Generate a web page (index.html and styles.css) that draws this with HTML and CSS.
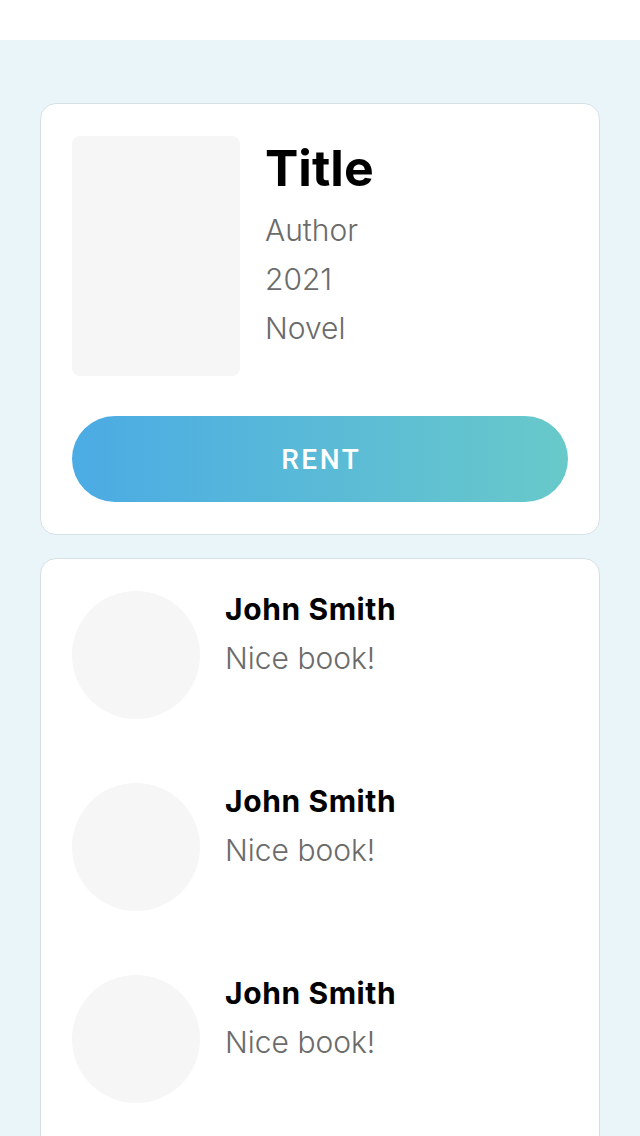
FILE: index.html
```html
<!DOCTYPE html>
<html>
<head>
<meta charset="utf-8">
<link rel="stylesheet" href="styles.css">
</head>
<body>
<div class="topbar"></div>
<main class="content">
  <section class="card book">
    <div class="book-info">
      <div class="cover"></div>
      <div class="meta">
        <h1 class="title">Title</h1>
        <div class="line">Author</div>
        <div class="line">2021</div>
        <div class="line">Novel</div>
      </div>
    </div>
    <button class="rent">RENT</button>
  </section>
  <section class="card comments">
    <div class="comment">
      <div class="avatar"></div>
      <div class="c-text">
        <div class="name">John Smith</div>
        <div class="msg">Nice book!</div>
      </div>
    </div>
    <div class="comment">
      <div class="avatar"></div>
      <div class="c-text">
        <div class="name">John Smith</div>
        <div class="msg">Nice book!</div>
      </div>
    </div>
    <div class="comment">
      <div class="avatar"></div>
      <div class="c-text">
        <div class="name">John Smith</div>
        <div class="msg">Nice book!</div>
      </div>
    </div>
  </section>
</main>
</body>
</html>
```

FILE: styles.css
```css
html, body {
  margin: 0;
  padding: 0;
}
body {
  background: #eaf5fa;
  font-family: Inter, "Noto Sans", sans-serif;
}
.topbar {
  height: 40px;
  background: #ffffff;
}
.content {
  padding: 63px 40px 40px;
  display: flex;
  flex-direction: column;
  gap: 23px;
}
.card {
  background: #ffffff;
  border: 1px solid #d5e1e7;
  border-radius: 16px;
  padding: 32px 31px;
}
.book-info {
  display: flex;
  gap: 25px;
}
.cover {
  width: 168px;
  height: 240px;
  background: #f6f6f6;
  border-radius: 8px;
  flex: none;
}
.meta {
  display: flex;
  flex-direction: column;
}
.title {
  margin: 0 0 6px 0;
  font-size: 50px;
  line-height: 64px;
  font-weight: 700;
  color: #000;
}
.line {
  font-size: 30px;
  line-height: 49px;
  font-weight: 300;
  color: #6b6b6b;
}
.rent {
  display: block;
  width: 100%;
  height: 86px;
  margin-top: 40px;
  border: none;
  border-radius: 43px;
  background: linear-gradient(90deg, #4babe4 0%, #68c9ca 100%);
  color: #ffffff;
  font-family: Roboto, sans-serif;
  font-weight: 500;
  font-size: 28px;
  letter-spacing: 2.5px;
  padding: 0 0 0 2.5px;
}
.comments {
  display: flex;
  flex-direction: column;
  gap: 64px;
  padding-bottom: 64px;
}
.comment {
  display: flex;
  gap: 25px;
}
.avatar {
  width: 128px;
  height: 128px;
  border-radius: 50%;
  background: #f6f6f6;
  flex: none;
}
.name {
  font-size: 30px;
  line-height: 36px;
  font-weight: 700;
  letter-spacing: 0.6px;
  color: #000;
}
.msg {
  margin-top: 7px;
  font-size: 30px;
  line-height: 48px;
  font-weight: 300;
  color: #6b6b6b;
}
```
